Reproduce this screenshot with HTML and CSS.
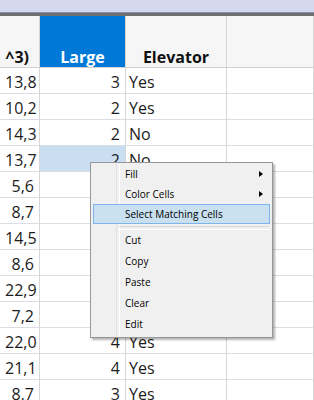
FILE: index.html
```html
<!DOCTYPE html>
<html lang="en">
<head>
    <meta charset="UTF-8">
    <meta name="viewport" content="width=device-width, initial-scale=1.0">
    <title>Data Table</title>
    <link rel="stylesheet" href="styles.css">
</head>
<body>
    <div class="topbar"></div>
    <div class="rule"></div>

    <div class="sheet">
        <div class="row head">
            <div class="cell first">^3)</div>
            <div class="cell sel">Large</div>
            <div class="cell">Elevator</div>
            <div class="cell"></div>
        </div>
        <div class="row"><div class="cell num">13,8</div><div class="cell num">3</div><div class="cell txt">Yes</div><div class="cell"></div></div>
        <div class="row"><div class="cell num">10,2</div><div class="cell num">2</div><div class="cell txt">Yes</div><div class="cell"></div></div>
        <div class="row"><div class="cell num">14,3</div><div class="cell num">2</div><div class="cell txt">No</div><div class="cell"></div></div>
        <div class="row"><div class="cell num">13,7</div><div class="cell num picked">2</div><div class="cell txt">No</div><div class="cell"></div></div>
        <div class="row"><div class="cell num">5,6</div><div class="cell num"></div><div class="cell txt"></div><div class="cell"></div></div>
        <div class="row"><div class="cell num">8,7</div><div class="cell num"></div><div class="cell txt"></div><div class="cell"></div></div>
        <div class="row"><div class="cell num">14,5</div><div class="cell num"></div><div class="cell txt"></div><div class="cell"></div></div>
        <div class="row"><div class="cell num">8,6</div><div class="cell num"></div><div class="cell txt"></div><div class="cell"></div></div>
        <div class="row"><div class="cell num">22,9</div><div class="cell num"></div><div class="cell txt"></div><div class="cell"></div></div>
        <div class="row"><div class="cell num">7,2</div><div class="cell num"></div><div class="cell txt"></div><div class="cell"></div></div>
        <div class="row"><div class="cell num">22,0</div><div class="cell num">4</div><div class="cell txt">Yes</div><div class="cell"></div></div>
        <div class="row"><div class="cell num">21,1</div><div class="cell num">4</div><div class="cell txt">Yes</div><div class="cell"></div></div>
        <div class="row"><div class="cell num">8,7</div><div class="cell num">3</div><div class="cell txt">Yes</div><div class="cell"></div></div>
    </div>

    <div class="menu">
        <div class="item sub">Fill</div>
        <div class="item sub">Color Cells</div>
        <div class="item on">Select Matching Cells</div>
        <div class="sep"></div>
        <div class="item low">Cut</div>
        <div class="item low">Copy</div>
        <div class="item low">Paste</div>
        <div class="item low">Clear</div>
        <div class="item low">Edit</div>
    </div>
</body>
</html>
```

FILE: styles.css
```css
* {
    margin: 0;
    padding: 0;
    box-sizing: border-box;
}

body {
    width: 314px;
    height: 400px;
    overflow: hidden;
    position: relative;
    background: #ffffff;
    font-family: "Open Sans", "Noto Sans", sans-serif;
    color: #1c1c1c;
}

.topbar {
    height: 13px;
    background: #d5d9ee;
    border-bottom: 1px solid #8b8fae;
}

.rule {
    height: 3px;
    background: #6f6f6f;
}

.row {
    display: grid;
    grid-template-columns: 40px 86px 101px 1fr;
    height: 26px;
}

.cell {
    border-right: 1px solid #d6d6d6;
    border-bottom: 1px solid #dcdce4;
    padding: 4px 5px 0;
    font-size: 16px;
    line-height: 21px;
    white-space: nowrap;
    overflow: hidden;
}

.num {
    text-align: right;
}

.txt {
    padding-left: 3px;
}

.picked {
    background: #c9def0;
}

/* header row */
.head {
    height: 52px;
}

.head .cell {
    display: flex;
    align-items: flex-end;
    justify-content: center;
    padding: 0;
    line-height: 19px;
    font-weight: bold;
    color: #111;
    background: #f6f6f6;
    border-bottom-color: #d0d0d0;
}

.head .first {
    justify-content: flex-end;
    padding-right: 10px;
}

.head .sel {
    background: #0078d7;
    color: #ffffff;
}

/* context menu */
.menu {
    position: absolute;
    left: 90px;
    top: 162px;
    width: 183px;
    padding: 1px 2px 2px;
    background: #f0f0f0;
    border: 1px solid #979797;
    box-shadow: 2px 2px 2px rgba(0, 0, 0, 0.3);
    font-size: 10px;
    color: #000;
}

.menu::before {
    content: '';
    position: absolute;
    left: 25px;
    top: 1px;
    bottom: 1px;
    width: 2px;
    border-left: 1px solid #e2e2e2;
    border-right: 1px solid #ffffff;
}

.item {
    position: relative;
    height: 20px;
    line-height: 18px;
    padding-left: 31px;
    border: 1px solid transparent;
}

.item.low {
    height: 21px;
    line-height: 19px;
}

.item.on {
    background: #c9e0f1;
    border-color: #7eb4ea;
}

.sub::after {
    content: '';
    position: absolute;
    right: 6px;
    top: 6px;
    border-left: 4px solid #000;
    border-top: 3.5px solid transparent;
    border-bottom: 3.5px solid transparent;
}

.sep {
    position: relative;
    height: 6px;
}

.sep::after {
    content: '';
    position: absolute;
    left: 26px;
    right: 1px;
    top: 2px;
    height: 2px;
    border-top: 1px solid #d7d7d7;
    border-bottom: 1px solid #ffffff;
}
```
